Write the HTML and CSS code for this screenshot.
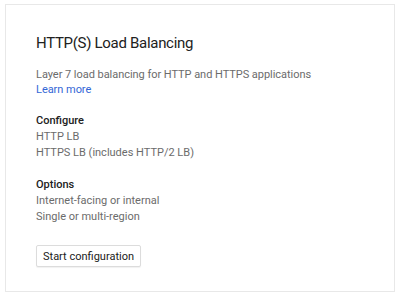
FILE: index.html
```html
<!DOCTYPE html>
<html lang="en">
  <head>
    <meta charset="UTF-8" />
    <meta name="viewport" content="width=device-width, initial-scale=1.0" />
    <title>HTTP(S) Load Balancing</title>
    <link rel="stylesheet" href="styles.css">
  </head>
  <body>
    <div class="card">
      <h1 class="card-title">HTTP(S) Load Balancing</h1>

      <p class="description">
        Layer 7 load balancing for HTTP and HTTPS applications<br />
        <a href="#" class="learn-more">Learn more</a>
      </p>

      <div class="section">
        <h2 class="section-title">Configure</h2>
        <div>HTTP LB</div>
        <div>HTTPS LB (includes HTTP/2 LB)</div>
      </div>

      <div class="section">
        <h2 class="section-title">Options</h2>
        <div>Internet-facing or internal</div>
        <div>Single or multi-region</div>
      </div>

      <button class="start-button">Start configuration</button>
    </div>
  </body>
</html>
```

FILE: styles.css
```css
body {
  margin: 4px 5px;
  font-family: Roboto, "Liberation Sans", Arial, sans-serif;
  font-size: 11px;
  line-height: 16px;
  color: #6b6b6b;
  background-color: white;
}

.card {
  width: 390px;
  height: 288px;
  box-sizing: border-box;
  padding: 28px 30px 25px;
  background-color: white;
  border: 1px solid #e8e8e8;
  box-shadow: 0 1px 2px rgba(0, 0, 0, 0.12);
}

.card-title {
  margin: 0 0 14px;
  font-size: 15px;
  line-height: 20px;
  font-weight: 400;
  letter-spacing: -0.3px;
  color: #212121;
}

.description {
  margin: 0 0 16px;
  line-height: 15px;
  letter-spacing: -0.04px;
}

.learn-more {
  color: #3367d6;
  text-decoration: none;
}

.section {
  margin-bottom: 16px;
}

.section-title {
  margin: 0;
  font-size: 11px;
  line-height: 16px;
  font-weight: 500;
  color: #212121;
}

.start-button {
  display: block;
  height: 22px;
  margin-top: 20px;
  padding: 0 6px;
  font-family: inherit;
  font-size: 11px;
  color: #212121;
  background-color: white;
  border: 1px solid #dcdcdc;
  border-radius: 2px;
  box-shadow: 0 1px 1px rgba(0, 0, 0, 0.06);
  cursor: pointer;
}
```
